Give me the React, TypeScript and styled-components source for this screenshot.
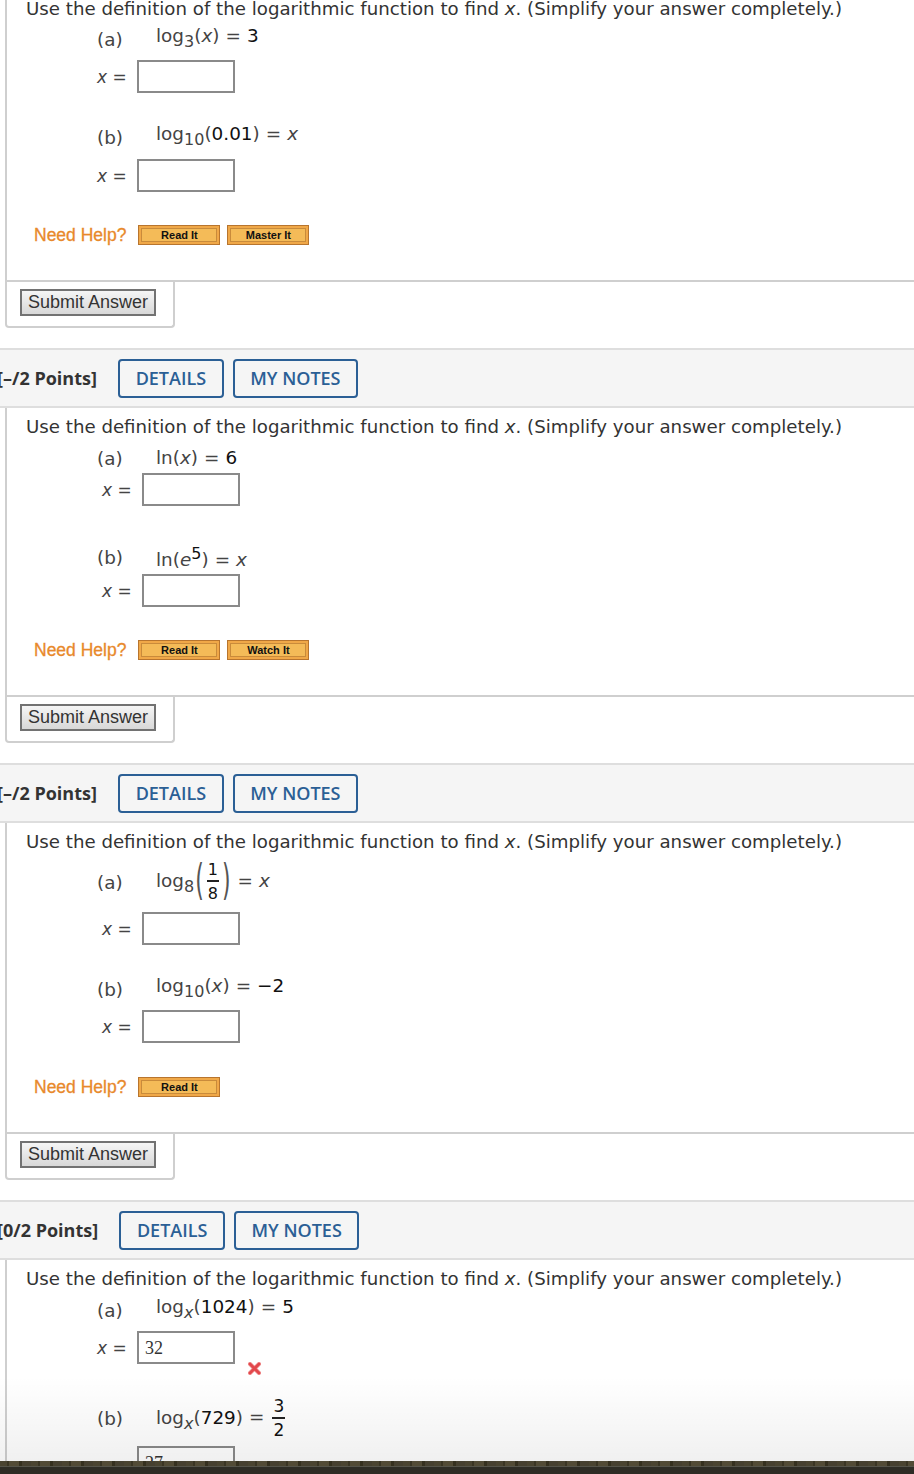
import React from "react";
import styled, { createGlobalStyle } from "styled-components";

const GlobalStyle = createGlobalStyle`
  html, body {
    margin: 0;
    padding: 0;
    background: #fff;
  }
  body {
    font-family: "DejaVu Sans", Verdana, sans-serif;
    color: #333;
    overflow: hidden;
  }
`;

const Page = styled.div`
  position: relative;
  height: 1474px;
  overflow: hidden;
`;

const QuestionBody = styled.div<{ $first?: boolean; $padBottom: number }>`
  margin-left: 5px;
  margin-top: ${(p) => (p.$first ? "-10px" : "0")};
  padding: 9px 0 ${(p) => p.$padBottom}px 19px;
  border-left: 2px solid #cfcfcf;
  border-bottom: 2px solid #cfcfcf;
`;

const Intro = styled.p`
  margin: 0;
  font-size: 18.2px;
  line-height: 20px;
  color: #333;
  white-space: nowrap;
`;

const EqRow = styled.div<{ $mt: number; $h?: number }>`
  display: flex;
  align-items: center;
  height: ${(p) => p.$h ?? 24}px;
  margin-top: ${(p) => p.$mt}px;
  padding-left: 71px;
  font-size: 18.4px;
  color: #444;
`;

const PartLabel = styled.span`
  flex: none;
  width: 59px;
`;

const Expr = styled.span`
  white-space: nowrap;
  line-height: 20px;
`;

const Sub = styled.span`
  font-size: 16px;
  vertical-align: -5px;
`;

const Sup = styled.span`
  font-size: 16px;
  vertical-align: 7px;
  color: #111;
`;

const Num = styled.span`
  color: #111;
`;

const Var = styled.i`
  font-style: italic;
`;

const Op = styled.span`
  margin: 0 6px;
`;

const BigParen = styled.span`
  display: inline-block;
  font-size: 22px;
  transform: scaleY(1.9);
  vertical-align: middle;
  margin: 0 1px;
  color: #555;
`;

const Frac = styled.span<{ $size: number; $gap: number }>`
  display: inline-flex;
  flex-direction: column;
  align-items: center;
  vertical-align: middle;
  font-size: ${(p) => p.$size}px;
  line-height: ${(p) => p.$size}px;
  color: #111;
  margin: 0 3px;

  & > span:first-child {
    padding-bottom: 2px;
  }
  & > span:last-child {
    padding-top: ${(p) => p.$gap}px;
  }
`;

const FracBar = styled.span`
  align-self: stretch;
  height: 0;
  border-top: 2px solid #222;
  margin: 0 -1px;
`;

const AnswerRow = styled.div<{ $mt: number; $indent: number; $labelLow?: boolean }>`
  display: flex;
  align-items: ${(p) => (p.$labelLow ? "flex-start" : "center")};
  margin-top: ${(p) => p.$mt}px;
  padding-left: ${(p) => p.$indent}px;
  font-size: 17px;
  color: #444;

  & > span:first-child {
    margin-top: ${(p) => (p.$labelLow ? "20px" : "0")};
  }
`;

const XLabel = styled.span`
  flex: none;
  width: 40px;
`;

const AnswerInput = styled.div`
  box-sizing: border-box;
  width: 98px;
  height: 33px;
  border: 2px solid #8a8a8a;
  padding: 4px 0 0 6px;
  font-family: "Liberation Serif", "Times New Roman", serif;
  font-size: 18px;
  line-height: 22px;
  color: #333;
`;

const WrongMark = styled.span`
  align-self: flex-end;
  margin: 0 0 -11px 13px;
  width: 13px;
  height: 13px;
  display: inline-flex;
`;

const HelpRow = styled.div<{ $mt: number }>`
  display: flex;
  align-items: center;
  gap: 7px;
  height: 20px;
  margin-top: ${(p) => p.$mt}px;
  padding-left: 8px;
`;

const HelpLabel = styled.span`
  font-family: "Liberation Sans", Arial, sans-serif;
  font-size: 17.5px;
  color: #e8892b;
  -webkit-text-stroke: 0.3px #e8892b;
  margin-right: 5px;
`;

const HelpButton = styled.button`
  box-sizing: border-box;
  width: 82px;
  height: 20px;
  padding: 0;
  border: 1px solid #b8752e;
  background: #f4bb58;
  box-shadow: inset 0 0 0 2px #f0a848, inset 0 0 0 3px #c98b3b;
  font-family: "Liberation Sans", Arial, sans-serif;
  font-weight: bold;
  font-size: 11px;
  color: #111;
`;

const SubmitBox = styled.div`
  box-sizing: border-box;
  margin-left: 5px;
  width: 170px;
  height: 46px;
  padding: 7px 0 0 13px;
  border: 2px solid #cfcfcf;
  border-top: none;
  border-radius: 0 0 4px 4px;
`;

const SubmitButton = styled.button`
  box-sizing: border-box;
  width: 136px;
  height: 27px;
  padding: 0 0 0 6px;
  text-align: left;
  border: 2px solid #727272;
  background: linear-gradient(#f5f5f5, #d8d8d8);
  font-family: "Liberation Sans", Arial, sans-serif;
  font-size: 18px;
  color: #333;
`;

const Header = styled.div`
  box-sizing: border-box;
  display: flex;
  align-items: center;
  height: 60px;
  margin-top: 20px;
  background: #f5f5f5;
  border-top: 2px solid #dedede;
  border-bottom: 2px solid #dedede;
`;

const Points = styled.span`
  margin-left: -3px;
  margin-right: 21px;
  font-family: "Open Sans", sans-serif;
  font-weight: 700;
  font-size: 18px;
  color: #333;
`;

const HeaderButton = styled.button<{ $w: number }>`
  box-sizing: border-box;
  width: ${(p) => p.$w}px;
  height: 39px;
  margin-right: 9px;
  padding: 0;
  border: 2px solid #2b5f95;
  border-radius: 4px;
  background: transparent;
  font-family: "Open Sans", sans-serif;
  font-weight: 600;
  font-size: 18px;
  color: #2b5f95;
`;

const BottomFade = styled.div`
  position: absolute;
  left: 0;
  right: 0;
  bottom: 13px;
  height: 85px;
  background: linear-gradient(rgba(0, 0, 0, 0), rgba(0, 0, 0, 0.06));
  pointer-events: none;
`;

const Taskbar = styled.div`
  position: absolute;
  left: 0;
  right: 0;
  bottom: 0;
  height: 13px;
  background:
    repeating-linear-gradient(90deg, #4a4431 0 7px, #3a3524 7px 9px, #524b36 9px 19px, #35301f 19px 22px, #464030 22px 31px) top / 100% 5px no-repeat,
    linear-gradient(#3d3826 0 5px, #55544a 5px 6px, #2e2c25 6px);
`;

const Help = ({ mt, watch, master }: { mt: number; watch?: boolean; master?: boolean }) => (
  <HelpRow $mt={mt}>
    <HelpLabel>Need Help?</HelpLabel>
    <HelpButton>Read It</HelpButton>
    {master && <HelpButton>Master It</HelpButton>}
    {watch && <HelpButton>Watch It</HelpButton>}
  </HelpRow>
);

type AnswerProps = { mt: number; indent: number; value?: string; wrong?: boolean; labelLow?: boolean };

const Answer = ({ mt, indent, value, wrong, labelLow }: AnswerProps) => (
  <AnswerRow $mt={mt} $indent={indent} $labelLow={labelLow}>
    <XLabel>
      <Var>x</Var> =
    </XLabel>
    <AnswerInput>{value}</AnswerInput>
    {wrong && (
      <WrongMark>
        <svg width="13" height="13" viewBox="0 0 13 13">
          <path d="M2 2 L11 11 M11 2 L2 11" stroke="#f29a9a" strokeWidth="4.2" strokeLinecap="round" />
          <path d="M2 2 L11 11 M11 2 L2 11" stroke="#e2484c" strokeWidth="2.8" strokeLinecap="round" />
        </svg>
      </WrongMark>
    )}
  </AnswerRow>
);

const Submit = () => (
  <SubmitBox>
    <SubmitButton>Submit Answer</SubmitButton>
  </SubmitBox>
);

const QuestionHeader = ({ points }: { points: string }) => (
  <Header>
    <Points>[{points} Points]</Points>
    <HeaderButton $w={106}>DETAILS</HeaderButton>
    <HeaderButton $w={125}>MY NOTES</HeaderButton>
  </Header>
);

const IntroText = () => (
  <Intro>
    Use the definition of the logarithmic function to find <Var>x</Var>. (Simplify your answer completely.)
  </Intro>
);

export default function App() {
  return (
    <Page>
      <GlobalStyle />

      <QuestionBody $first $padBottom={35}>
        <IntroText />
        <EqRow $mt={8}>
          <PartLabel>(a)</PartLabel>
          <Expr>
            log<Sub>3</Sub>(<Var>x</Var>)<Op>=</Op><Num>3</Num>
          </Expr>
        </EqRow>
        <Answer mt={9} indent={71} />
        <EqRow $mt={32}>
          <PartLabel>(b)</PartLabel>
          <Expr>
            log<Sub>10</Sub>(<Num>0.01</Num>)<Op>=</Op><Var>x</Var>
          </Expr>
        </EqRow>
        <Answer mt={10} indent={71} />
        <Help mt={33} master />
      </QuestionBody>
      <Submit />

      <QuestionHeader points="–/2" />
      <QuestionBody $padBottom={35}>
        <IntroText />
        <EqRow $mt={9}>
          <PartLabel>(a)</PartLabel>
          <Expr>
            ln(<Var>x</Var>)<Op>=</Op><Num>6</Num>
          </Expr>
        </EqRow>
        <Answer mt={3} indent={76} />
        <EqRow $mt={39}>
          <PartLabel>(b)</PartLabel>
          <Expr>
            ln(<Var>e</Var><Sup>5</Sup>)<Op>=</Op><Var>x</Var>
          </Expr>
        </EqRow>
        <Answer mt={5} indent={76} />
        <Help mt={33} watch />
      </QuestionBody>
      <Submit />

      <QuestionHeader points="–/2" />
      <QuestionBody $padBottom={35}>
        <IntroText />
        <EqRow $mt={10} $h={40}>
          <PartLabel>(a)</PartLabel>
          <Expr>
            log<Sub>8</Sub>
            <BigParen>(</BigParen>
            <Frac $size={16} $gap={4}>
              <span>1</span>
              <FracBar />
              <span>8</span>
            </Frac>
            <BigParen>)</BigParen>
            <Op>=</Op>
            <Var>x</Var>
          </Expr>
        </EqRow>
        <Answer mt={10} indent={76} />
        <EqRow $mt={32}>
          <PartLabel>(b)</PartLabel>
          <Expr>
            log<Sub>10</Sub>(<Var>x</Var>)<Op>=</Op><Num>−2</Num>
          </Expr>
        </EqRow>
        <Answer mt={9} indent={76} />
        <Help mt={34} />
      </QuestionBody>
      <Submit />

      <QuestionHeader points="0/2" />
      <QuestionBody $padBottom={35}>
        <IntroText />
        <EqRow $mt={9}>
          <PartLabel>(a)</PartLabel>
          <Expr>
            log<Sub>
              <Var>x</Var>
            </Sub>
            (<Num>1024</Num>)<Op>=</Op><Num>5</Num>
          </Expr>
        </EqRow>
        <Answer mt={9} indent={71} value="32" wrong />
        <EqRow $mt={34} $h={40}>
          <PartLabel>(b)</PartLabel>
          <Expr>
            log<Sub>
              <Var>x</Var>
            </Sub>
            (<Num>729</Num>)<Op>=</Op>
            <Frac $size={17} $gap={3}>
              <span>3</span>
              <FracBar />
              <span>2</span>
            </Frac>
          </Expr>
        </EqRow>
        <Answer mt={8} indent={71} value="27" labelLow />
        <Help mt={33} />
      </QuestionBody>

      <BottomFade />
      <Taskbar />
    </Page>
  );
}
